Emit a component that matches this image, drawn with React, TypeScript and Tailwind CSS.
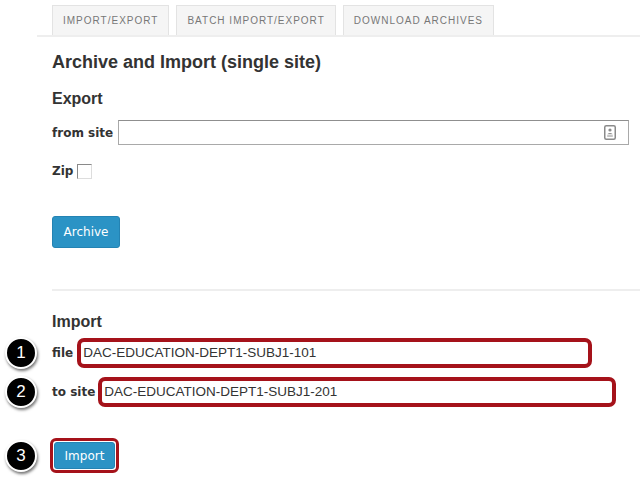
import React from 'react';

const tabs = ['IMPORT/EXPORT', 'BATCH IMPORT/EXPORT', 'DOWNLOAD ARCHIVES'];

// numbered black marker drawn over the screenshot
const Marker = ({ n }: { n: number }) => (
  <div className="absolute left-[-47px] top-1/2 -translate-y-1/2 w-[32px] h-[32px] rounded-full bg-black border-2 border-white shadow-[1px_2px_3px_rgba(0,0,0,0.55)] flex items-center justify-center text-white text-[17px] font-['Liberation_Sans',sans-serif]">
    {n}
  </div>
);

const Highlight = ({ value, width }: { value: string; width: string }) => (
  <div className={`${width} h-[30px] border-[4px] border-[#a5121a] rounded-[7px] bg-white flex items-center pl-[2px] text-[13.5px] text-[#333] font-['Liberation_Sans',sans-serif]`}>
    {value}
  </div>
);

const ContactIcon = () => (
  <svg width="12" height="15" viewBox="0 0 12 15" fill="none">
    <rect x="0.75" y="0.75" width="10.5" height="13.5" rx="1.5" stroke="#8a8a8a" strokeWidth="1.5" />
    <circle cx="6" cy="5" r="1.6" fill="#8a8a8a" />
    <path d="M3.2 9.2 Q6 6.8 8.8 9.2 Z" fill="#8a8a8a" />
    <line x1="3.2" y1="11" x2="8.8" y2="11" stroke="#8a8a8a" strokeWidth="1" />
  </svg>
);

const App = () => {
  return (
    <div className="w-[640px] h-[496px] bg-white overflow-hidden text-[#333] font-['DejaVu_Sans',sans-serif]">
      {/* Tabs */}
      <div className="ml-[37px] border-b-2 border-[#eeeeee] pt-[5px]">
        <div className="flex gap-[7px] pl-[15px]">
          {tabs.map((t) => (
            <div
              key={t}
              className="h-[30px] px-[10px] flex items-center bg-[#f5f5f5] border border-b-0 border-[#e3e3e3] text-[10px] tracking-[1px] text-[#777] font-['Liberation_Sans',sans-serif]"
            >
              {t}
            </div>
          ))}
        </div>
      </div>

      <div className="pl-[52px]">
        <h1 className="mt-[14px] text-[18px] leading-[22px] font-bold text-[#333] font-['Liberation_Sans',sans-serif]">
          Archive and Import (single site)
        </h1>
        <h2 className="mt-[16px] text-[16px] leading-[20px] font-bold font-['Liberation_Sans',sans-serif]">
          Export
        </h2>

        <div className="mt-[11px] flex items-center gap-[5px] pr-[11px]">
          <span className="text-[12px] font-bold">from site</span>
          <div className="flex-1 h-[25px] border border-[#a9a9a9] border-t-[#8f8f8f] bg-white flex items-center justify-end pr-[12px]">
            <ContactIcon />
          </div>
        </div>

        <div className="mt-[18px] h-[16px] flex items-center gap-[4px]">
          <span className="text-[12px] font-bold">Zip</span>
          <span className="w-[15px] h-[15px] border border-[#8a8a8a] border-r-[#ddd] border-b-[#ddd] bg-white" />
        </div>

        <button className="mt-[37px] w-[68px] h-[32px] rounded-[3px] bg-[#2b93c5] border border-[#2483b3] text-white text-[12px]">
          Archive
        </button>

        <div className="mt-[41px] h-[2px] bg-[#eeeeee]" />

        <h2 className="mt-[21px] text-[16px] leading-[20px] font-bold font-['Liberation_Sans',sans-serif]">
          Import
        </h2>

        <div className="relative mt-[6px] flex items-center gap-[4px]">
          <Marker n={1} />
          <span className="text-[12px] font-bold">file</span>
          <Highlight value="DAC-EDUCATION-DEPT1-SUBJ1-101" width="w-[515px]" />
        </div>

        <div className="relative mt-[9px] flex items-center gap-[3px]">
          <Marker n={2} />
          <span className="text-[12px] font-bold">to site</span>
          <Highlight value="DAC-EDUCATION-DEPT1-SUBJ1-201" width="w-[518px]" />
        </div>

        <div className="relative mt-[31px] ml-[-2px] w-fit">
          <div className="absolute left-[-45px] top-1/2 -translate-y-1/2 w-[32px] h-[32px] rounded-full bg-black border-2 border-white shadow-[1px_2px_3px_rgba(0,0,0,0.55)] flex items-center justify-center text-white text-[17px] font-['Liberation_Sans',sans-serif]">
            3
          </div>
          <div className="border-[3px] border-[#a5121a] rounded-[6px] px-[1px] py-[1px] bg-white">
            <button className="w-[61px] h-[27px] rounded-[3px] bg-[#2b93c5] border border-[#2483b3] text-white text-[12px]">
              Import
            </button>
          </div>
        </div>
      </div>
    </div>
  );
};

export default App;
